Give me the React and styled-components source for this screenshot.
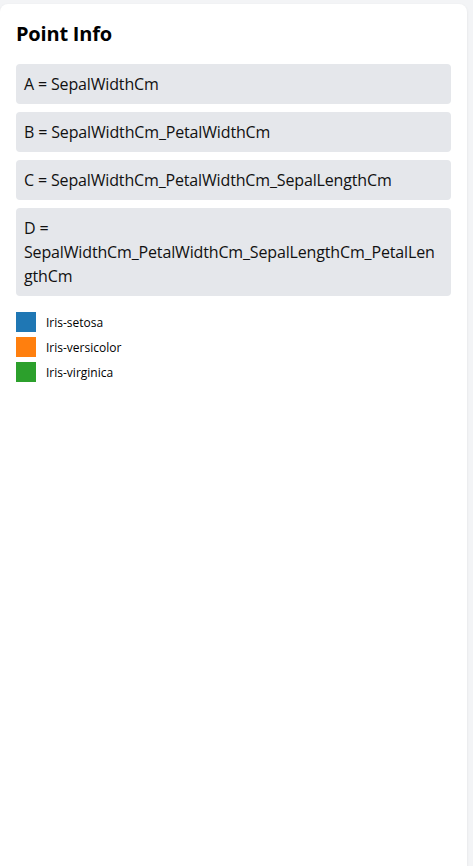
import styled, { createGlobalStyle } from "styled-components";

const GlobalStyle = createGlobalStyle`
  html, body {
    margin: 0;
    padding: 0;
    background: #f3f4f6;
  }
  body {
    font-family: "Open Sans", "Noto Sans", sans-serif;
    color: #111827;
  }
`;

const features = [
  { key: "A", value: "SepalWidthCm" },
  { key: "B", value: "SepalWidthCm_PetalWidthCm" },
  { key: "C", value: "SepalWidthCm_PetalWidthCm_SepalLengthCm" },
  { key: "D", value: "SepalWidthCm_PetalWidthCm_SepalLengthCm_PetalLengthCm" },
];

const species = [
  { name: "Iris-setosa", color: "#1f77b4" },
  { name: "Iris-versicolor", color: "#ff7f0e" },
  { name: "Iris-virginica", color: "#2ca02c" },
];

function App() {
  return (
    <>
      <GlobalStyle />
      <Page>
        <Card>
          <Title>Point Info</Title>
          <FeatureList>
            {features.map((f) => (
              <Feature key={f.key}>
                {f.key} = {f.value}
              </Feature>
            ))}
          </FeatureList>
          <Legend>
            {species.map((s) => (
              <LegendRow key={s.name}>
                <Swatch $color={s.color} />
                <LegendLabel>{s.name}</LegendLabel>
              </LegendRow>
            ))}
          </Legend>
        </Card>
      </Page>
    </>
  );
}

export default App;

const Page = styled.div`
    display: flex;
    min-height: 100vh;
    padding: 4px 6px 0 0;
    box-sizing: border-box;
  `,
  Card = styled.section`
    flex: 1;
    min-width: 0;
    background: #ffffff;
    border-radius: 8px 8px 0 0;
    box-shadow: 0 1px 3px rgba(0, 0, 0, 0.08);
    padding: 16px;
  `,
  Title = styled.h2`
    margin: 0 0 16px;
    font-size: 20px;
    line-height: 28px;
    font-weight: 700;
    letter-spacing: -0.2px;
    color: #000;
  `,
  FeatureList = styled.div`
    display: flex;
    flex-direction: column;
    gap: 8px;
  `,
  Feature = styled.div`
    background: #e5e7eb;
    border-radius: 4px;
    padding: 8px;
    font-size: 16px;
    line-height: 24px;
    letter-spacing: -0.15px;
    color: #111;
    overflow-wrap: anywhere;
  `,
  Legend = styled.div`
    display: flex;
    flex-direction: column;
    gap: 5px;
    margin-top: 16px;
  `,
  LegendRow = styled.div`
    display: flex;
    align-items: center;
    gap: 10px;
    height: 20px;
  `,
  Swatch = styled.span`
    flex: none;
    width: 20px;
    height: 20px;
    background: ${(p) => p.$color};
  `,
  LegendLabel = styled.span`
    font-size: 12px;
    color: #000;
  `;
